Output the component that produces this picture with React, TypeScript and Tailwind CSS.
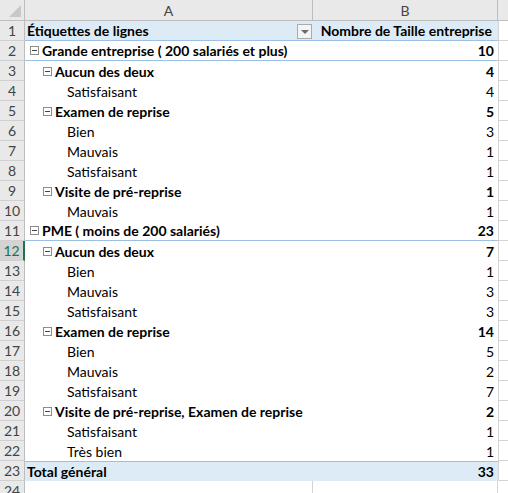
import React from "react";

type Row = { label: string; value?: number; level: 0 | 1 | 2 | 3 | 9 };

const rows: Row[] = [
  { label: "Grande entreprise ( 200 salariés et plus)", value: 10, level: 1 },
  { label: "Aucun des deux", value: 4, level: 2 },
  { label: "Satisfaisant", value: 4, level: 3 },
  { label: "Examen de reprise", value: 5, level: 2 },
  { label: "Bien", value: 3, level: 3 },
  { label: "Mauvais", value: 1, level: 3 },
  { label: "Satisfaisant", value: 1, level: 3 },
  { label: "Visite de pré-reprise", value: 1, level: 2 },
  { label: "Mauvais", value: 1, level: 3 },
  { label: "PME ( moins de 200 salariés)", value: 23, level: 1 },
  { label: "Aucun des deux", value: 7, level: 2 },
  { label: "Bien", value: 1, level: 3 },
  { label: "Mauvais", value: 3, level: 3 },
  { label: "Satisfaisant", value: 3, level: 3 },
  { label: "Examen de reprise", value: 14, level: 2 },
  { label: "Bien", value: 5, level: 3 },
  { label: "Mauvais", value: 2, level: 3 },
  { label: "Satisfaisant", value: 7, level: 3 },
  { label: "Visite de pré-reprise, Examen de reprise", value: 2, level: 2 },
  { label: "Satisfaisant", value: 1, level: 3 },
  { label: "Très bien", value: 1, level: 3 },
  { label: "Total général", value: 33, level: 9 },
];

function Minus() {
  return (
    <span className="w-[9px] h-[9px] border border-[#8c8c8c] bg-white flex items-center justify-center shrink-0">
      <span className="w-[5px] h-px bg-[#444]" />
    </span>
  );
}

function RowNum({ n, active }: { n: number; active?: boolean }) {
  return (
    <div
      className={`w-[25px] shrink-0 h-full flex items-center justify-center text-[14px] border-b border-[#d0d0d0] ${
        active
          ? "bg-[#d3d3d3] text-[#217346] border-r-2 border-r-[#217346]"
          : "bg-[#e9e9e9] text-[#444] border-r border-r-[#bdbdbd]"
      }`}
    >
      {n}
    </div>
  );
}

export default function App() {
  return (
    <div
      className="w-[508px] h-[493px] overflow-hidden bg-white text-black select-none"
      style={{ fontFamily: "Lato, 'Liberation Sans', sans-serif" }}
    >
      {/* column headers */}
      <div className="flex h-[21px] bg-[#e9e9e9] border-b border-[#bdbdbd]">
        <div className="w-[25px] shrink-0 border-r border-[#bdbdbd] flex items-end justify-end p-[3px]">
          <span className="w-0 h-0 border-l-[12px] border-l-transparent border-b-[12px] border-b-[#c8c8c8]" />
        </div>
        <div className="w-[288px] shrink-0 border-r border-[#bdbdbd] flex items-center justify-center text-[14px] text-[#444]">
          A
        </div>
        <div className="w-[185px] shrink-0 border-r border-[#bdbdbd] flex items-center justify-center text-[14px] text-[#444]">
          B
        </div>
        <div className="flex-1" />
      </div>

      {/* pivot header */}
      <div className="flex h-[20px]">
        <RowNum n={1} />
        <div className="w-[473px] shrink-0 flex bg-[#ddebf7] border-b border-[#9bc2e6] font-bold text-[14px]">
          <div className="w-[288px] shrink-0 flex items-center pl-[2px] relative">
            Étiquettes de lignes
            <span className="absolute right-[1px] top-[3px] w-[15px] h-[15px] bg-[#f4f4f4] border border-[#ababab] flex items-center justify-center">
              <span className="w-0 h-0 border-l-[4px] border-r-[4px] border-t-[4px] border-l-transparent border-r-transparent border-t-[#6b6b6b]" />
            </span>
          </div>
          <div className="flex-1 flex items-center justify-end pr-[6px] whitespace-nowrap">
            Nombre de Taille entreprise
          </div>
        </div>
        <div className="flex-1 border-l border-b border-[#d4d4d4]" />
      </div>

      {rows.map((r, i) => {
        const n = i + 2;
        const bold = r.level !== 3;
        const total = r.level === 9;
        const line =
          r.level === 1 ? "border-b border-[#9bc2e6]" : total ? "border-t border-[#9bc2e6] bg-[#ddebf7]" : "";
        const ml = r.level === 1 ? "pl-[5px]" : r.level === 2 ? "pl-[18px]" : r.level === 3 ? "pl-[42px]" : "pl-[2px]";
        return (
          <div key={n} className="flex h-[20px]">
            <RowNum n={n} active={n === 12} />
            <div className={`w-[473px] shrink-0 flex text-[14px] ${bold ? "font-bold" : ""} ${line}`}>
              <div className={`w-[288px] shrink-0 flex items-center gap-[3px] whitespace-nowrap ${ml}`}>
                {(r.level === 1 || r.level === 2) && <Minus />}
                <span>{r.label}</span>
              </div>
              <div className="flex-1 flex items-center justify-end pr-[4px]">{r.value}</div>
            </div>
            <div className="flex-1 border-l border-b border-[#d4d4d4]" />
          </div>
        );
      })}

      {/* row 24 */}
      <div className="flex h-[20px]">
        <RowNum n={24} />
        <div className="w-[288px] shrink-0 border-r border-[#d4d4d4]" />
        <div className="w-[185px] shrink-0 border-r border-[#d4d4d4]" />
        <div className="flex-1" />
      </div>
    </div>
  );
}
